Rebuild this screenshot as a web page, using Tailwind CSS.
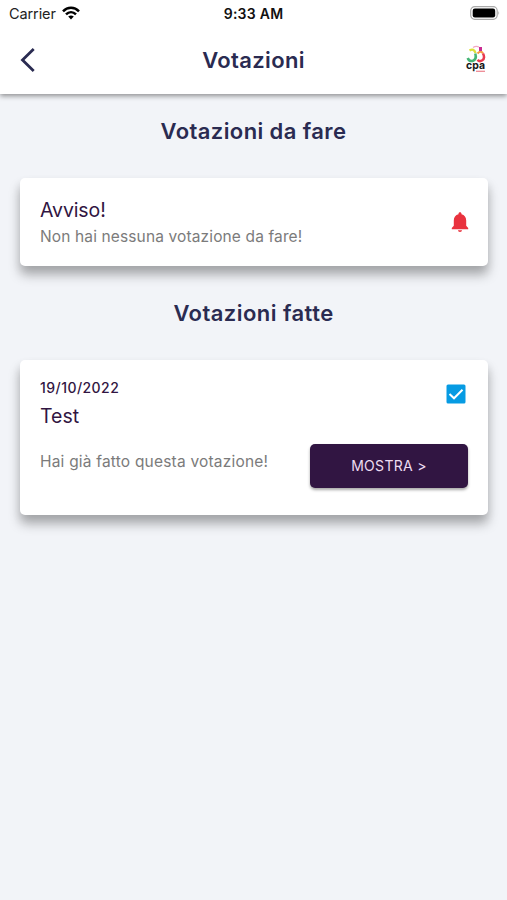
<!DOCTYPE html>
<html lang="it">
<head>
<meta charset="utf-8">
<title>Votazioni</title>
<script src="https://cdn.jsdelivr.net/npm/@tailwindcss/browser@4"></script>
</head>
<body class="w-[507px] h-[900px] overflow-hidden bg-[#f2f4f8] font-['Inter',sans-serif] text-[#2a2b51]">
<header class="relative h-[94px] bg-white shadow-[0_2px_5px_rgba(0,0,0,0.42)]">
  <div class="grid grid-cols-3 items-center h-7 pl-[9px] pr-[7px] text-black">
    <div class="flex items-center gap-[6px] text-[14.5px] leading-7 text-[#222]"><span class="tracking-[-0.1px]">Carrier</span>
      <svg class="w-[18px] h-[14px] -mt-[3px]" viewBox="0 0 18 14" fill="none" stroke="#000" stroke-width="2.5"><path d="M1 5.3C5.5.7 12.500.7 17 5.300"/><path d="M4 8.400C6.900 5.500 11.100 5.500 14 8.400"/><path d="M6.200 10.600Q9 8.200 11.800 10.600L9 13.500Z" fill="#000" stroke="none"/></svg>
    </div>
    <div class="text-center text-[14px] font-semibold leading-7 tracking-[0.25px] -ml-[2px] text-[#111] whitespace-nowrap">9:33 AM</div>
    <svg class="justify-self-end w-[30px] h-[14px] -mt-[2px]" viewBox="0 0 30 14"><rect x=".7" y=".7" width="26.500" height="12.600" rx="4" fill="#fff" stroke="#aaa" stroke-width="1.200"/><rect x="2.700" y="2.500" width="22.500" height="9" rx="2.200"/><path d="M28.300 4.800Q30 7 28.300 9.200Z" fill="#aaa"/></svg>
  </div>
  <div class="grid grid-cols-[60px_1fr_60px] items-center h-[64px]">
    <svg class="ml-[20px] w-[16px] h-[24px]" viewBox="0 0 16 24" fill="none" stroke="#2a2b51" stroke-width="2.800"><path d="M13.700 1L2.500 12L13.700 23"/></svg>
    <h1 class="text-center text-[22px] font-semibold leading-7 tracking-[0.35px]">Votazioni</h1>
    <svg class="ml-[18px] w-[22px] h-[30px]" viewBox="0 0 22 30" fill="none">
      <path d="M8 2.500Q11 .5 14 2" stroke="#f3a5c5" stroke-width="1.200"/>
      <path d="M4.500 5.500Q9 3 10.500 8" stroke="#dde03c" stroke-width="2.400"/>
      <path d="M10.300 8.500Q12 14.500 7.500 16Q4 16.500 2.700 13" stroke="#45b575" stroke-width="2.600"/>
      <path d="M12.500 8.500Q16 5 18 8.500" stroke="#f49a45" stroke-width="2.200"/>
      <path d="M18 8.500Q20.500 13.500 17 15.500Q14.500 17 12.500 14.800" stroke="#e83a4f" stroke-width="2.500"/>
      <rect x="14" y="2" width="3" height="4" fill="#c92b91"/>
      <text x="1" y="23.800" textLength="19" lengthAdjust="spacingAndGlyphs" font-family="Inter" font-size="11" font-weight="700" fill="#161616">cpa</text>
      <path d="M11 26.300H20" stroke="#ee8994" stroke-width="1.300"/>
    </svg>
  </div>
</header>
<main class="px-5">
  <h2 class="pt-[23px] text-center text-[22px] font-semibold leading-7 tracking-[0.4px]">Votazioni da fare</h2>
  <section class="mt-[33px] h-[88px] flex items-center justify-between rounded-[5px] bg-white pl-5 pr-[16px] mr-[-1px] shadow-[0_9px_12px_rgba(0,0,0,0.28),0_5px_10px_rgba(0,0,0,0.08)]">
    <div>
      <h3 class="text-[19.500px] leading-7 tracking-[-0.1px] text-[#311542]">Avviso!</h3>
      <p class="relative top-px text-[15.500px] leading-6 tracking-[0.130px] text-[#7b7b7b]">Non hai nessuna votazione da fare!</p>
    </div>
    <svg class="w-6 h-6" viewBox="0 0 24 24" fill="#e9323e"><path d="M10 20.300h4c0 1.100-.9 1.700-2 1.700s-2-.6-2-1.700zM12 2.300c.9 0 1.500.6 1.500 1.500v.5c3 .8 4.700 3 4.700 6.200v5.200l2 2.300v1.300H3.800V18l2-2.300v-5.200c0-3.200 1.700-5.400 4.700-6.200v-.5c0-.9.6-1.500 1.500-1.500z"/></svg>
  </section>
  <h2 class="mt-[33px] text-center text-[22px] font-semibold leading-7 tracking-[0.45px]">Votazioni fatte</h2>
  <section class="mt-[33px] h-[155px] rounded-[5px] bg-white pl-5 pr-[20px] pt-[15px] mr-[-1px] shadow-[0_9px_12px_rgba(0,0,0,0.28),0_5px_10px_rgba(0,0,0,0.08)]">
    <div class="flex justify-between">
      <div>
        <p class="text-[14px] font-medium leading-[26px] tracking-[0.450px] text-[#311542]">19/10/2022</p>
        <h3 class="pt-px text-[19.500px] leading-7 tracking-[0px] text-[#311542]">Test</h3>
      </div>
      <svg class="w-6 h-6 mt-[7px]" viewBox="0 0 24 24"><rect x="2.500" y="2.500" width="19" height="19" rx="1.500" fill="#069be3"/><path d="M5.500 12L10 16.300L18.500 7.700" fill="none" stroke="#fff" stroke-width="2"/></svg>
    </div>
    <div class="flex justify-between mt-[14px]">
      <p class="pt-[6px] text-[15.500px] leading-6 tracking-[0.2px] text-[#7b7b7b]">Hai già fatto questa votazione!</p>
      <button class="w-[158px] h-[44px] pb-px rounded-[5px] bg-[#311542] text-[14px] tracking-[0.3px] text-[#eddcf2] shadow-[0_2px_3px_rgba(0,0,0,0.35)]">MOSTRA &gt;</button>
    </div>
  </section>
</main>
</body>
</html>
